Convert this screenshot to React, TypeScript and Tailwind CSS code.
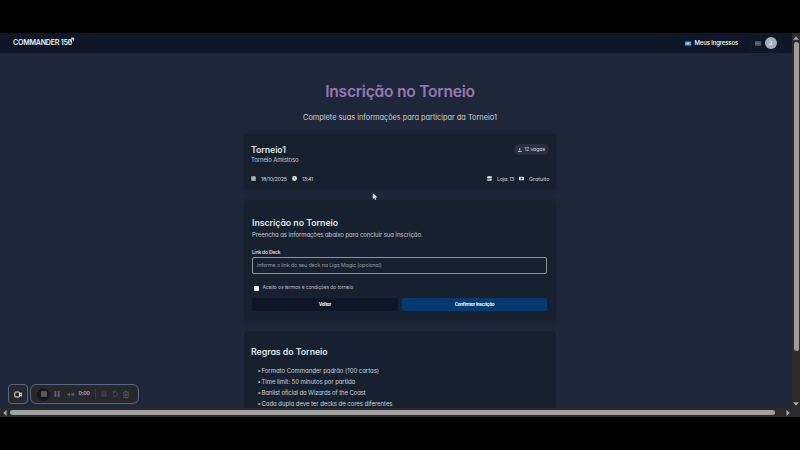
import React from "react";

const rules = [
  { text: "Formato Commander padrão (100 cartas)", cls: "tracking-[-0.03px]" },
  { text: "Time limit: 50 minutos por partida", cls: "tracking-[-0.06px]" },
  { text: "Banlist oficial da Wizards of the Coast", cls: "tracking-[-0.12px]" },
  { text: "Cada dupla deve ter decks de cores diferentes", cls: "tracking-[-0.05px]" },
];

function Header() {
  return (
    <header className="flex h-5 shrink-0 items-center justify-between bg-[#0e1627] pl-[13px] pr-[11.5px] text-white">
      <div className="flex items-center">
        <span className="text-[7.1px] leading-none font-semibold tracking-[-0.25px] text-[#eef1f6]">COMMANDER 150</span>
        <svg className="-ml-[4px] -mt-[5px] h-[7px] w-[7px]" viewBox="0 0 7 7" fill="none" stroke="#e8ebf0" strokeWidth="1">
          <path d="M1 5.5L5.5 1M3 1.2L5.8 1 5.5 3.6M1.5 3L4 5" />
        </svg>
      </div>
      <div className="flex items-center">
        <svg className="h-[5px] w-[6px]" viewBox="0 0 6 5">
          <rect y="0.5" width="6" height="4" rx="0.5" fill="#3fb4d2" />
          <path d="M2 2.5h2" stroke="#a8e4ef" strokeWidth="1.4" />
        </svg>
        <span className="ml-[3.5px] w-[43px] text-[6px] leading-none font-medium tracking-[-0.14px] whitespace-nowrap">Meus Ingressos</span>
        <div className="ml-3 flex h-[18px] w-[31px] items-center rounded-[3px] border border-[#131c2c] pl-[4px]">
          <svg className="h-[5px] w-[6px]" viewBox="0 0 6 5">
            <path d="M0 .5h6v4H0z" fill="#3c4656" />
            <path d="M0 .9h6M0 2.5h6M0 4.1h6" stroke="#7d8797" strokeWidth=".6" />
          </svg>
          <span className="ml-1 flex h-3 w-3 shrink-0 items-center justify-center rounded-full bg-[#a4adba] text-[5px] leading-none font-semibold">J</span>
        </div>
      </div>
    </header>
  );
}

function TournamentCard() {
  return (
    <section className="flex h-[55px] shrink-0 flex-col rounded-[4px] bg-[#17202e] pl-[7px] pr-[7px] pt-[10px] shadow-[0_1px_4px_rgba(10,16,28,0.3)]">
      <div className="flex justify-between">
        <div>
          <h2 className="text-[8.8px] leading-[11px] font-semibold tracking-[-0.1px] text-[#dfe2e7]">Torneio1</h2>
          <p className="text-[6px] leading-[9px] tracking-[-0.12px] text-[#c5cad2]">Torneio Amistoso</p>
        </div>
        <span className="flex h-[11px] w-[35px] items-center justify-center gap-[2px] rounded-full bg-[#2b3040] text-[5.3px] leading-none tracking-[-0.2px] whitespace-nowrap text-[#ccd0d8]">
          <svg className="h-1 w-1" viewBox="0 0 4 4" fill="#b9bfca">
            <circle cx="1.7" cy="1.1" r=".9" />
            <path d="M0 4c0-2 3-2 3 0zM3.2 3h.8v1h-.8z" />
          </svg>
          12 vagas
        </span>
      </div>
      <div className="mt-[9px] flex h-[10px] items-center justify-between text-[5.4px] leading-[6px] text-[#cbd0d7]">
        <div className="flex items-center">
          <svg className="h-[5px] w-[5px]" viewBox="0 0 5 5">
            <path d="M.3.4h4.4v4.4H.3z" fill="#c3c8d0" />
            <path d="M.3 1.6h4.4M1.8 1.8v3M3.2 1.8v3M.3 3.2h4.4" stroke="#5d6673" strokeWidth=".2" />
          </svg>
          <span className="ml-[5px] w-[26px] pt-px tracking-[-0.25px] whitespace-nowrap">18/10/2025</span>
          <svg className="ml-[5px] h-[5px] w-[5px]" viewBox="0 0 5 5">
            <circle cx="2.5" cy="2.5" r="2.4" fill="#eef0f3" />
            <path d="M2.5 1v1.6l1 .7" fill="none" stroke="#17202e" strokeWidth=".6" />
          </svg>
          <span className="ml-[5px] pt-px tracking-[-0.35px]">13:41</span>
        </div>
        <div className="flex items-center">
          <svg className="h-[5px] w-[5px]" viewBox="0 0 5 5" fill="#e4e7eb">
            <path d="M.4.3h4.2L5 2H0zM.4 2.5h4.2v2.3H.4z" />
            <path d="M1.2 2.8h2v1h-2z" fill="#6b7480" />
          </svg>
          <span className="ml-[5px] w-[17px] pt-px tracking-[-0.3px] whitespace-nowrap">Loja: 13</span>
          <svg className="ml-[5px] h-[5px] w-[5px]" viewBox="0 0 5 5">
            <path d="M0 .8h5v3.4H0z" fill="#e4e7eb" />
            <circle cx="2.5" cy="2.5" r=".9" fill="#17202e" />
          </svg>
          <span className="ml-[5px] w-[20px] pt-px whitespace-nowrap">Gratuito</span>
        </div>
      </div>
    </section>
  );
}

function FormCard() {
  return (
    <section className="flex h-[120px] shrink-0 flex-col rounded-[4px] bg-[#17202e] pl-2 pr-[9px] pt-[17px] shadow-[0_1px_4px_rgba(10,16,28,0.3)]">
      <h2 className="text-[8.8px] leading-[12px] font-semibold tracking-[-0.05px] text-[#dfe2e7]">Inscrição no Torneio</h2>
      <p className="text-[6px] leading-[11px] tracking-[-0.07px] text-[#c5cad2]">Preencha as informações abaixo para concluir sua inscrição.</p>
      <label className="mt-[8px] text-[5px] leading-[8px] font-medium tracking-[-0.22px] text-[#e6e8ec]">Link do Deck</label>
      <div className="mt-px flex h-[17px] shrink-0 items-center rounded-[2px] border border-[#8c939e] px-1 text-[5.4px] leading-none tracking-[-0.16px] text-[#9198a4]">
        Informe o link do seu deck na Liga Magic (opcional)
      </div>
      <div className="mt-[9px] flex h-[10px] items-center text-[5px] leading-none tracking-[-0.13px] text-[#b9bec7]">
        <span className="ml-[1.5px] mr-1 h-[5px] w-[5px] rounded-[1px] bg-white" />
        <span className="pb-[1.5px]">Aceito os termos e condições do torneio</span>
      </div>
      <div className="mt-[5px] flex gap-1 text-[4.4px] font-bold tracking-[-0.18px] text-white">
        <button className="flex h-[13px] w-[146px] items-center justify-center rounded-[2px] bg-[#0d1526] pt-[1.5px] leading-none">Voltar</button>
        <button className="flex h-[13px] flex-1 items-center justify-center rounded-[2px] bg-[#043a70] pt-[1.5px] leading-none">Confirmar Inscrição</button>
      </div>
    </section>
  );
}

function RulesCard() {
  return (
    <section className="h-[90px] shrink-0 rounded-[4px] bg-[#17202e] px-[7px] pt-[15px]">
      <h2 className="text-[8.8px] leading-[12px] font-semibold tracking-[-0.05px] text-[#dfe2e7]">Regras do Torneio</h2>
      <ul className="mt-[7px] ml-[6.5px] text-[6px] leading-[11px] text-[#cdd1d8]">
        {rules.map((r) => (
          <li key={r.text} className="flex">
            <span className="w-[4px]">•</span>
            <span className={r.cls}>{r.text}</span>
          </li>
        ))}
      </ul>
    </section>
  );
}

function Recorder() {
  return (
    <div className="absolute top-[351px] left-[8px] flex gap-[2px]">
      <div className="flex h-5 w-5 items-center justify-center rounded-[4px] border-[1.5px] border-[#59677c] bg-[#26282d]">
        <svg className="h-[7px] w-2" viewBox="0 0 8 7" fill="none" stroke="#e8eaed" strokeWidth="1">
          <rect x=".8" y="1" width="4.7" height="5" rx=".8" />
          <path d="M5.5 2.8l1.8-1v3.4l-1.8-1" />
        </svg>
      </div>
      <div className="flex h-5 w-[109px] items-center rounded-[6px] border-[1.5px] border-[#59677c] bg-[#26282d] pl-[6px]">
        <span className="flex h-[13px] w-[13px] items-center justify-center rounded-full bg-[#17181b]">
          <span className="h-[6px] w-[6px] rounded-[1px] bg-[#55575b]" />
        </span>
        <svg className="ml-[3.5px] h-[6px] w-[6px]" viewBox="0 0 6 6" fill="#5b5e63"><path d="M.3 0h2v6h-2zM3.7 0h2v6h-2z" /></svg>
        <svg className="ml-[6px] h-[5px] w-[8px]" viewBox="0 0 8 5" fill="#55585d"><path d="M4 .5v4L.3 2.5zM8 .5v4L4.3 2.5z" /></svg>
        <span className="ml-[5px] w-[12px] text-[5.3px] leading-none font-medium tracking-[-0.15px] text-[#c4c6c9]">0:00</span>
        <span className="ml-[4.5px] h-[10px] w-px bg-[#3b3e43]" />
        <svg className="ml-[5px] h-[6px] w-[6px]" viewBox="0 0 6 6" stroke="#4a4d52" strokeWidth=".7"><path d="M2 0v6M4.2 0v6M0 2h6M0 4.2h6" /></svg>
        <svg className="ml-[5px] h-[6px] w-[6px]" viewBox="0 0 6 6" fill="none" stroke="#4a4d52" strokeWidth=".9"><path d="M1 1.5A2.4 2.4 0 1 1 .6 3.6M1 0v1.8h1.8" /></svg>
        <svg className="ml-[5px] h-[7px] w-[6px]" viewBox="0 0 6 7" fill="none" stroke="#4f565e" strokeWidth=".9"><path d="M0 1.2h6M2 .5h2M.9 1.2v5.3h4.2V1.2M2.4 2.6v2.6M3.6 2.6v2.6" /></svg>
      </div>
    </div>
  );
}

export default function App() {
  return (
    <div className="flex h-[450px] w-[800px] flex-col overflow-hidden bg-black pt-[33px] font-['Inter','Noto_Sans',sans-serif] [font-feature-settings:'cv11','ss03']">
      <div className="relative flex h-[375px] shrink-0">
        <div className="flex w-[792px] flex-col overflow-hidden bg-[#1d2739]">
          <Header />
          <main className="ml-[244px] flex w-[312px] flex-col pt-[29px]">
            <h1 className="text-center text-[15.6px] leading-[20px] font-semibold tracking-[-0.24px] text-[#9578b3]">Inscrição no Torneio</h1>
            <p className="mt-[10px] mb-[11px] text-center text-[7.35px] leading-[11px] text-[#cdd1d8]">Complete suas informações para participar da Torneio1</p>
            <div className="flex flex-col gap-[11px]">
              <TournamentCard />
              <FormCard />
              <RulesCard />
            </div>
          </main>
        </div>
        <div className="flex w-2 flex-col items-center justify-between bg-[#2b2b2b] py-[2.5px]">
          <svg className="h-1 w-[6px]" viewBox="0 0 6 4" fill="#a3a3a3"><path d="M3 .3L6 3.7H0z" /></svg>
          <div className="mt-[2px] mb-auto h-[309px] w-[5px] rounded-full bg-[#9d9d9d]" />
          <svg className="h-1 w-[6px]" viewBox="0 0 6 4" fill="#a3a3a3"><path d="M0 .3h6L3 3.7z" /></svg>
        </div>
        <Recorder />
        <svg className="absolute top-[159px] left-[372px] h-[9px] w-[6px]" viewBox="0 0 6 9">
          <path d="M.8.8v6.4l1.5-1.3.9 2.1 1.2-.5-.9-2h2z" fill="#fff" stroke="#222b38" strokeWidth=".3" />
        </svg>
      </div>
      <div className="flex h-[9px] shrink-0 items-center bg-[#2b2b2b] pl-[3px]">
        <svg className="h-[6px] w-1" viewBox="0 0 4 6" fill="#b0b0b0"><path d="M3.5 0v6L.3 3z" /></svg>
        <div className="ml-[3px] h-[5px] w-[765px] rounded-full bg-[#a1a1a1]" />
        <svg className="ml-[11px] h-[6px] w-1" viewBox="0 0 4 6" fill="#b0b0b0"><path d="M.5 0v6l3.2-3z" /></svg>
      </div>
    </div>
  );
}
